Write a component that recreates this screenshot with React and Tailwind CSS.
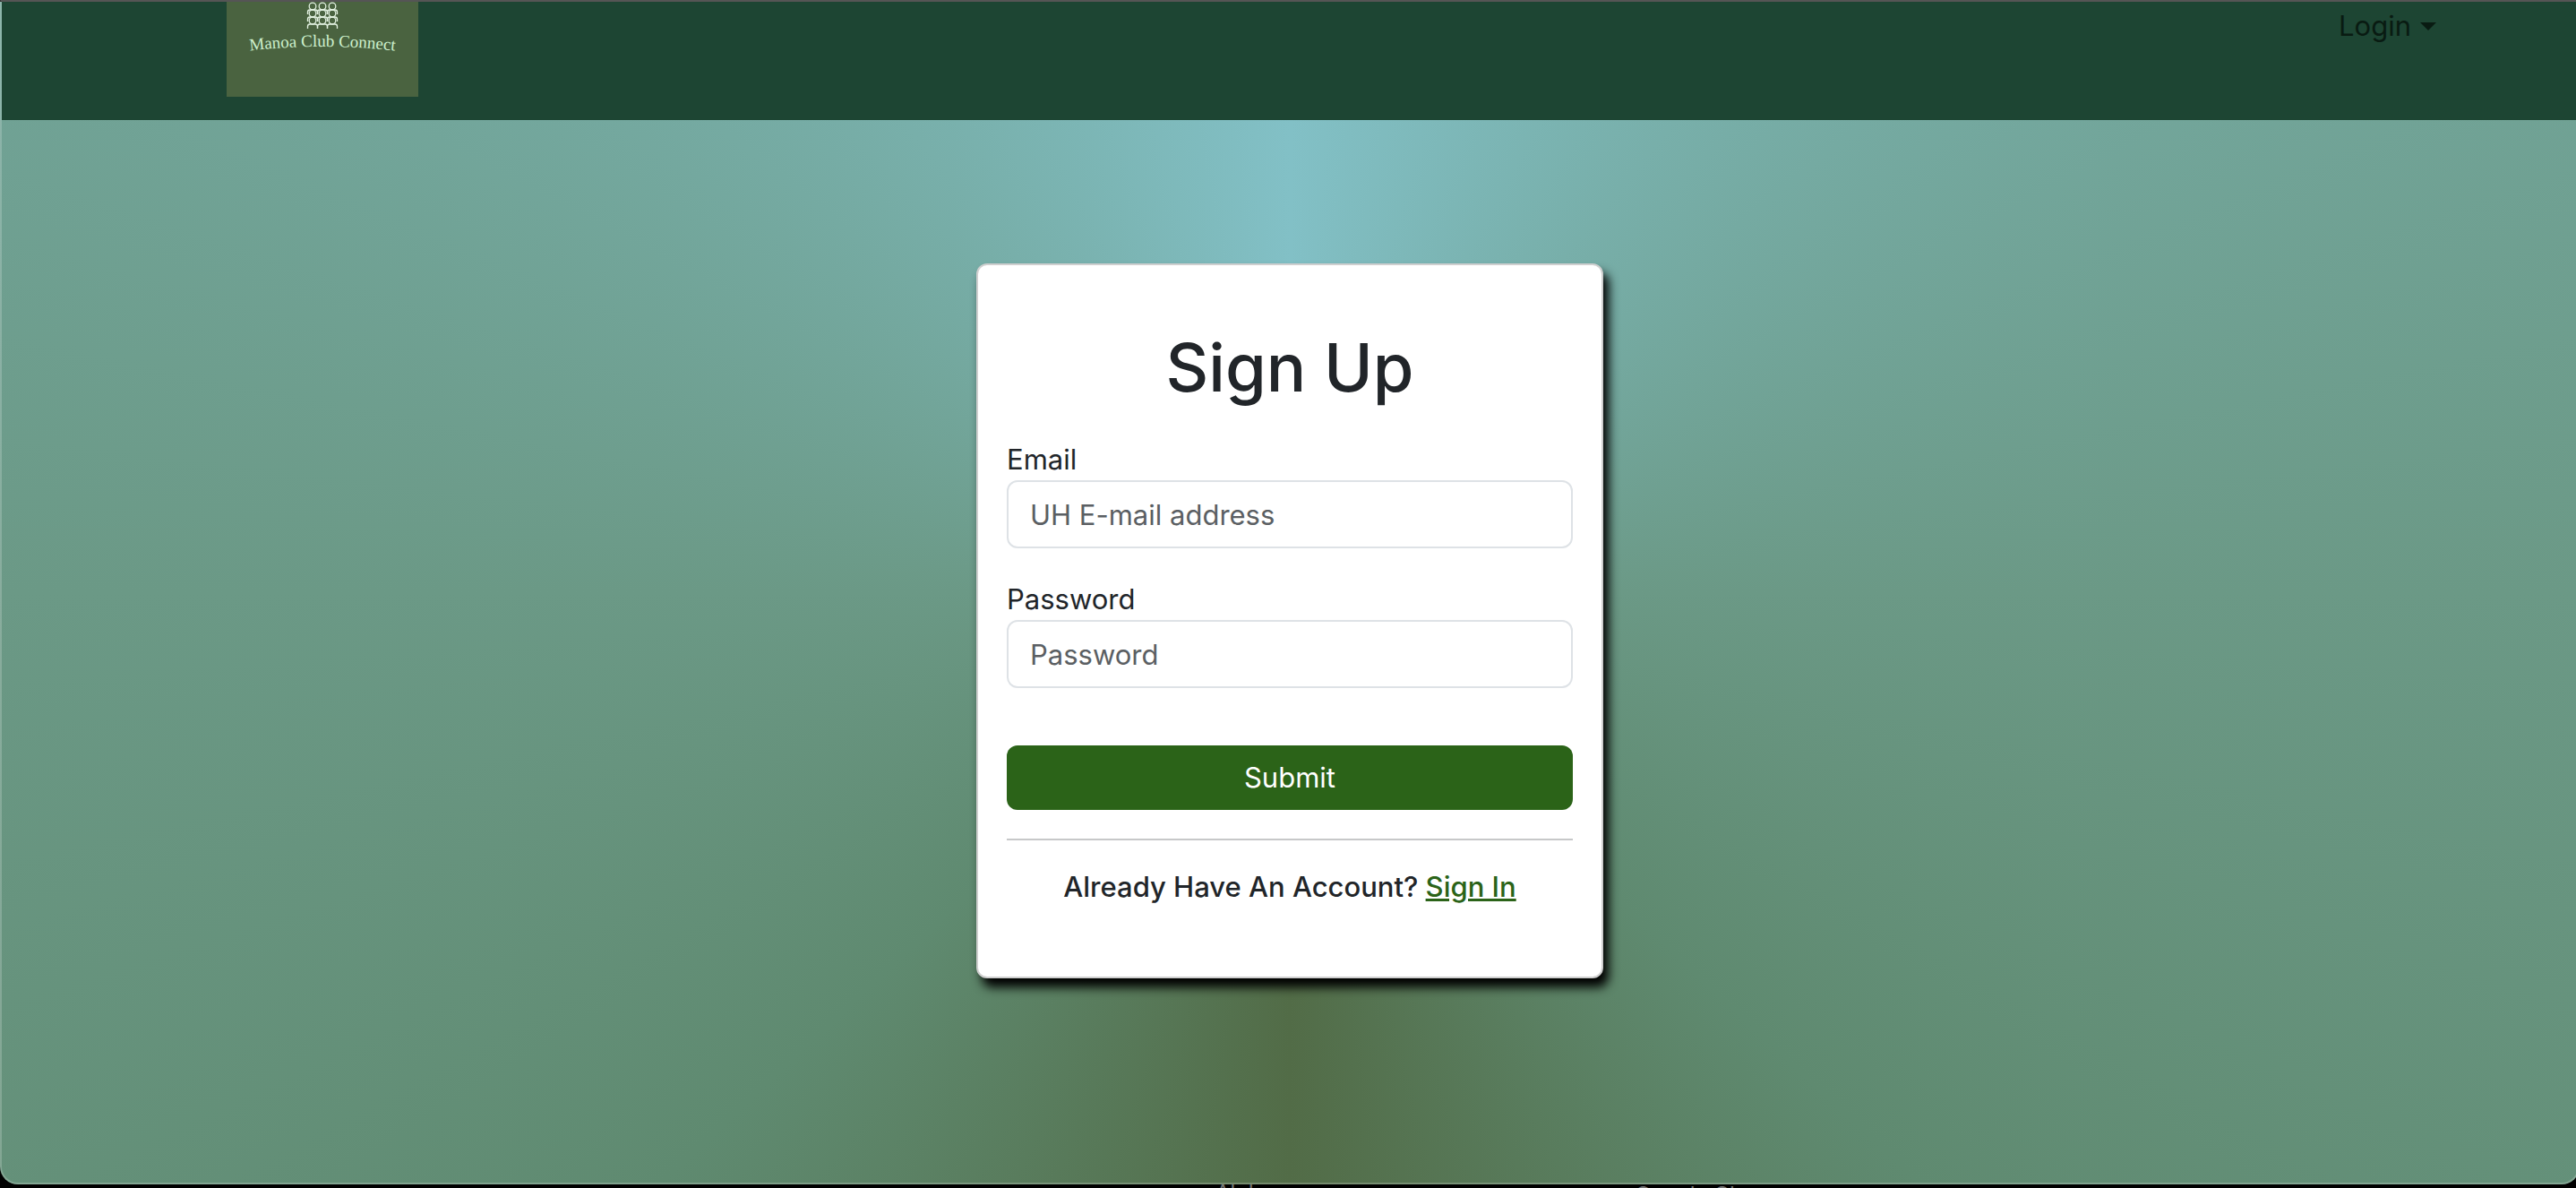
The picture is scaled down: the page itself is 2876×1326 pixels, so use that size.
import { useId } from "react";

const PEOPLE_COLUMNS = [5, 16, 27];
const PEOPLE_ROWS = [7, 15, 23];

function Logo() {
  const curve = useId();
  return (
    <svg viewBox="0 0 214 106" className="h-[106px] w-[214px]" role="img" aria-label="Manoa Club Connect">
      <rect width="214" height="106" fill="#4a6340" />
      <g transform="translate(91 -2)" fill="none" stroke="#e4f2e2" strokeWidth="1.3">
        {PEOPLE_ROWS.map((y) =>
          PEOPLE_COLUMNS.map((x) => (
            <g key={`${x}-${y}`}>
              <circle cx={x} cy={y} r="3.8" />
              <path d={`M${x - 5.5} ${y + 9}v-2.500q0-2.500 2.500-2.500h6q2.500 0 2.500 2.500v2.500`} />
            </g>
          )),
        )}
      </g>
      <path id={curve} d="M7 57Q107 43 207 57" fill="none" />
      <text fill="#cdf0cd" fontSize="19" fontFamily="'Liberation Serif', serif">
        <textPath href={`#${curve}`} startOffset="50%" textAnchor="middle">
          Manoa Club Connect
        </textPath>
      </text>
    </svg>
  );
}

function Field({ id, label, type, placeholder }) {
  return (
    <div className="flex flex-col">
      <label htmlFor={id} className="pt-0.5 text-[31px] leading-[46px]">
        {label}
      </label>
      <input
        id={id}
        type={type}
        placeholder={placeholder}
        className="h-[76px] w-full rounded-xl border-2 border-[#dee2e6] bg-white px-6 text-[31px] placeholder:text-[#5b5f63]"
      />
    </div>
  );
}

export default function App() {
  return (
    <div className="flex h-screen flex-col overflow-hidden bg-black font-[Inter,sans-serif] text-[#212529]">
      <div className="flex w-[calc(100%+4px)] flex-1 flex-col overflow-hidden rounded-b-[20px] border-2 border-t-[#555555] border-x-white/20 border-b-white/20 bg-[conic-gradient(#82c0c6,#6b9986_25%,#5f8a70_37%,#526c47_50%,#5f8a70_63%,#6b9986_75%,#82c0c6)] bg-origin-border">
        <header className="flex h-[132px] shrink-0 items-start justify-between bg-[#1d4533] pr-[158px] pl-[251px]">
          <a href="#home">
            <Logo />
          </a>
          <button type="button" className="flex items-center gap-2.5 text-[31px] leading-[54px] text-[#091b12]">
            Login
            <svg viewBox="0 0 18 9" className="h-[9px] w-[18px]" fill="currentColor" aria-hidden="true">
              <path d="M0 0h18L9 9z" />
            </svg>
          </button>
        </header>
        <main className="flex justify-center pt-40">
          <form className="w-[700px] rounded-xl border-2 border-[#cfcfcf] bg-white px-8 pt-16 pb-20 shadow-[6px_10px_12px_#000000]">
            <h1 className="pt-1 text-center text-[74px] leading-[92px] font-medium">Sign Up</h1>
            <div className="mt-8 flex flex-col gap-8">
              <Field id="email" label="Email" type="email" placeholder="UH E-mail address" />
              <Field id="password" label="Password" type="password" placeholder="Password" />
            </div>
            <button type="submit" className="mt-16 h-[72px] w-full rounded-xl bg-[#2b6318] text-[31px] text-white">
              Submit
            </button>
            <hr className="my-8 border-t-2 border-[#c7c8c9]" />
            <p className="text-center text-[31px] leading-[40px] font-medium">
              Already Have An Account?{" "}
              <a href="#signin" className="text-[#2b6318] underline">
                Sign In
              </a>
            </p>
          </form>
        </main>
      </div>
      <footer className="flex h-1 shrink-0 items-start gap-[404px] overflow-hidden pl-[1357px] text-[24px] text-[#777777]">
        <span className="leading-5">Aloha</span>
        <span className="leading-6">Google Chrome</span>
      </footer>
    </div>
  );
}
